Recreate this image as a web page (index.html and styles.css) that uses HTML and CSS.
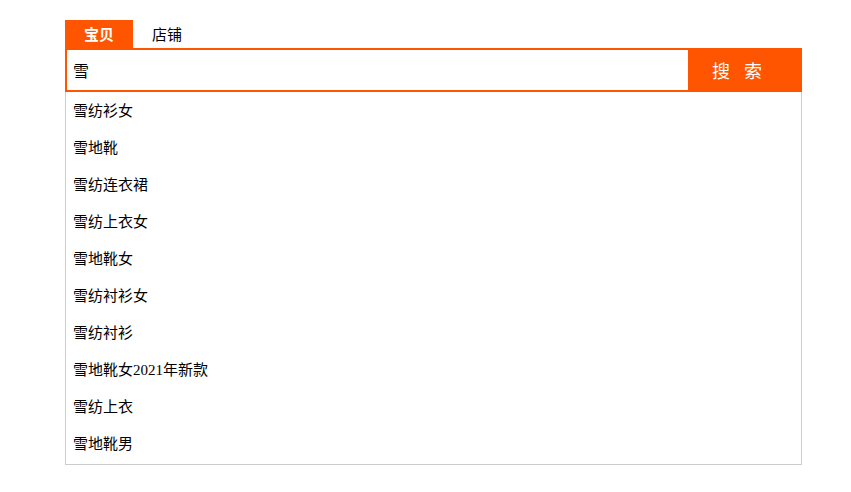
FILE: index.html
```html
<!DOCTYPE html>
<html lang="zh">
<head>
<meta charset="utf-8">
<link rel="stylesheet" href="styles.css">
</head>
<body>
<div class="search">
  <div class="tabs">
    <div class="tab active">宝贝</div>
    <div class="tab">店铺</div>
  </div>
  <div class="bar">
    <div class="input">雪</div>
    <div class="btn"><span>搜</span><span>索</span></div>
  </div>
  <ul class="list">
    <li>雪纺衫女</li>
    <li>雪地靴</li>
    <li>雪纺连衣裙</li>
    <li>雪纺上衣女</li>
    <li>雪地靴女</li>
    <li>雪纺衬衫女</li>
    <li>雪纺衬衫</li>
    <li>雪地靴女2021年新款</li>
    <li>雪纺上衣</li>
    <li>雪地靴男</li>
  </ul>
</div>
</body>
</html>
```
FILE: styles.css
```css
html, body { margin: 0; padding: 0; background: #fff; }
body { font-family: "Liberation Serif", "Noto Sans CJK SC", serif; color: #000; }
.search { width: 737px; margin: 20px 0 0 65px; }
.tabs { display: flex; height: 28px; }
.tab { width: 68px; font-size: 15px; line-height: 28px; text-align: center; font-family: "Noto Sans CJK SC", sans-serif; }
.tab.active { background: #ff5500; color: #fff; font-weight: bold; }
.bar { display: flex; height: 44px; border: 2px solid #ff5500; box-sizing: border-box; }
.input { flex: 1; background: #fff; font-size: 16px; line-height: 40px; padding-left: 6px; font-family: "Noto Sans CJK SC", sans-serif; }
.btn { width: 112px; background: #ff5500; color: #fff; font-size: 18px; display: flex; gap: 14px; padding-left: 24px; box-sizing: border-box; align-items: center; font-family: "Noto Sans CJK SC", sans-serif; }
.list { list-style: none; margin: 0; padding: 1px 0; border: 1px solid #ccc; border-top: none; }
.list li { height: 37px; line-height: 37px; font-size: 15px; padding-left: 7px; }
```
